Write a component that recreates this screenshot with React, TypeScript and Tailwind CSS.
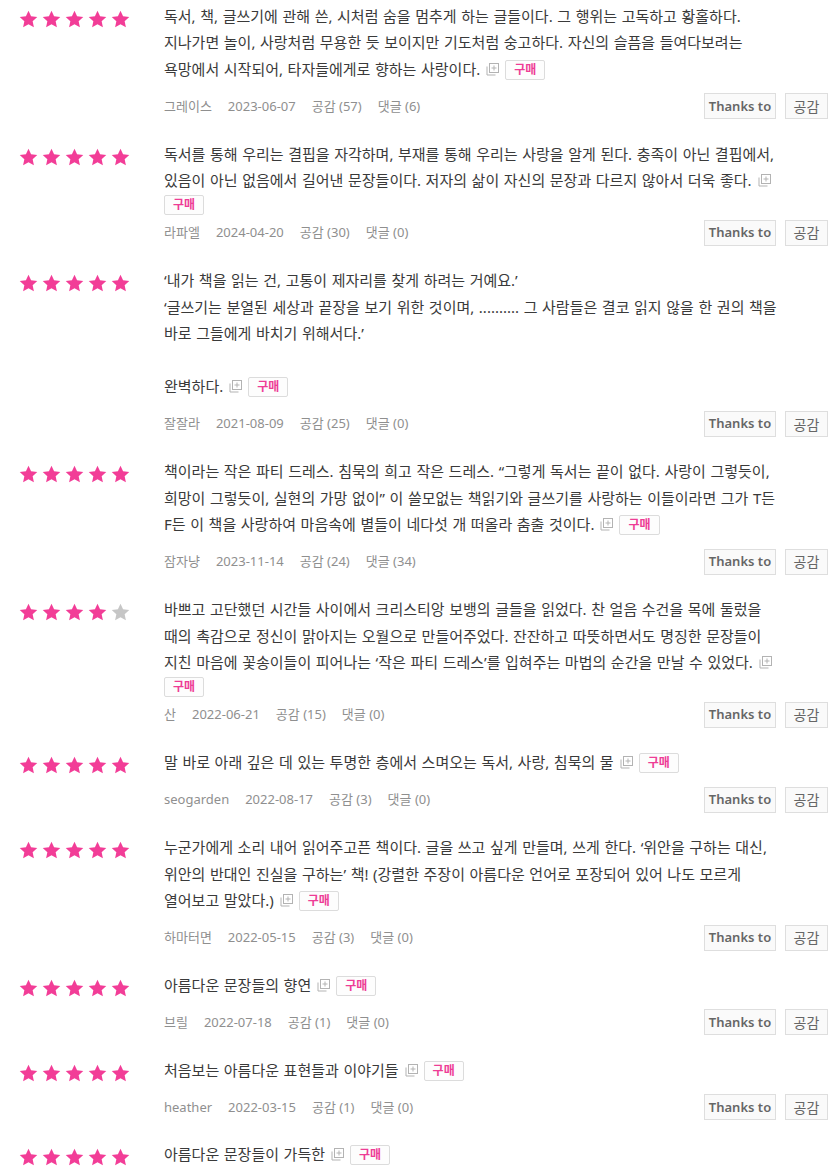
import React from "react";

type Review = {
  rating: number;
  lines: string[];
  badgeOwnLine?: boolean;
  user: string;
  date: string;
  likes: number;
  comments: number;
};

const reviews: Review[] = [
  {
    rating: 5,
    lines: [
      "독서, 책, 글쓰기에 관해 쓴, 시처럼 숨을 멈추게 하는 글들이다. 그 행위는 고독하고 황홀하다.",
      "지나가면 놀이, 사랑처럼 무용한 듯 보이지만 기도처럼 숭고하다. 자신의 슬픔을 들여다보려는",
      "욕망에서 시작되어, 타자들에게로 향하는 사랑이다.",
    ],
    user: "그레이스",
    date: "2023-06-07",
    likes: 57,
    comments: 6,
  },
  {
    rating: 5,
    lines: [
      "독서를 통해 우리는 결핍을 자각하며, 부재를 통해 우리는 사랑을 알게 된다. 충족이 아닌 결핍에서,",
      "있음이 아닌 없음에서 길어낸 문장들이다. 저자의 삶이 자신의 문장과 다르지 않아서 더욱 좋다.",
    ],
    badgeOwnLine: true,
    user: "라파엘",
    date: "2024-04-20",
    likes: 30,
    comments: 0,
  },
  {
    rating: 5,
    lines: [
      "‘내가 책을 읽는 건, 고통이 제자리를 찾게 하려는 거예요.’",
      "‘글쓰기는 분열된 세상과 끝장을 보기 위한 것이며, .......... 그 사람들은 결코 읽지 않을 한 권의 책을",
      "바로 그들에게 바치기 위해서다.’",
      "",
      "완벽하다.",
    ],
    user: "잘잘라",
    date: "2021-08-09",
    likes: 25,
    comments: 0,
  },
  {
    rating: 5,
    lines: [
      "책이라는 작은 파티 드레스. 침묵의 희고 작은 드레스. “그렇게 독서는 끝이 없다. 사랑이 그렇듯이,",
      "희망이 그렇듯이, 실현의 가망 없이” 이 쓸모없는 책읽기와 글쓰기를 사랑하는 이들이라면 그가 T든",
      "F든 이 책을 사랑하여 마음속에 별들이 네다섯 개 떠올라 춤출 것이다.",
    ],
    user: "잠자냥",
    date: "2023-11-14",
    likes: 24,
    comments: 34,
  },
  {
    rating: 4,
    lines: [
      "바쁘고 고단했던 시간들 사이에서 크리스티앙 보뱅의 글들을 읽었다. 찬 얼음 수건을 목에 둘렀을",
      "때의 촉감으로 정신이 맑아지는 오월으로 만들어주었다. 잔잔하고 따뜻하면서도 명징한 문장들이",
      "지친 마음에 꽃송이들이 피어나는 ‘작은 파티 드레스’를 입혀주는 마법의 순간을 만날 수 있었다.",
    ],
    badgeOwnLine: true,
    user: "산",
    date: "2022-06-21",
    likes: 15,
    comments: 0,
  },
  {
    rating: 5,
    lines: ["말 바로 아래 깊은 데 있는 투명한 층에서 스며오는 독서, 사랑, 침묵의 물"],
    user: "seogarden",
    date: "2022-08-17",
    likes: 3,
    comments: 0,
  },
  {
    rating: 5,
    lines: [
      "누군가에게 소리 내어 읽어주고픈 책이다. 글을 쓰고 싶게 만들며, 쓰게 한다. ‘위안을 구하는 대신,",
      "위안의 반대인 진실을 구하는’ 책! (강렬한 주장이 아름다운 언어로 포장되어 있어 나도 모르게",
      "열어보고 말았다.)",
    ],
    user: "하마터면",
    date: "2022-05-15",
    likes: 3,
    comments: 0,
  },
  {
    rating: 5,
    lines: ["아름다운 문장들의 향연"],
    user: "브릴",
    date: "2022-07-18",
    likes: 1,
    comments: 0,
  },
  {
    rating: 5,
    lines: ["처음보는 아름다운 표현들과 이야기들"],
    user: "heather",
    date: "2022-03-15",
    likes: 1,
    comments: 0,
  },
  {
    rating: 5,
    lines: ["아름다운 문장들이 가득한"],
    user: "",
    date: "",
    likes: 0,
    comments: 0,
  },
];

function Star({ on }: { on: boolean }) {
  return (
    <svg width="19" height="18" viewBox="0 0 24 23" className="shrink-0">
      <path
        d="M12 0.8l3.3 7.2 7.9 0.9-5.9 5.4 1.6 7.8L12 18.2l-6.9 3.9 1.6-7.8L0.8 8.9l7.9-0.9z"
        fill={on ? "#f23d97" : "#c6c6c6"}
      />
    </svg>
  );
}

function ExpandIcon() {
  return (
    <svg width="13" height="13" viewBox="0 0 13 13" className="inline-block align-[-1px] mx-[6px]">
      <path d="M1 3.5V12H9.5" fill="none" stroke="#b3b3b3" strokeWidth="1" />
      <rect x="3.5" y="0.5" width="9" height="9" fill="#fff" stroke="#b3b3b3" strokeWidth="1" />
      <path d="M8 2.5v5M5.5 5h5" stroke="#b3b3b3" strokeWidth="1" />
    </svg>
  );
}

function BuyBadge() {
  return (
    <span className="inline-flex items-center justify-center h-[20px] px-[8px] border border-[#dcdcdc] rounded-[2px] bg-[#fdfdfd] text-[12px] font-bold text-[#ee3d96] leading-none align-[1px] [word-spacing:0]">
      구매
    </span>
  );
}

function ReviewRow({ r, last }: { r: Review; last?: boolean }) {
  return (
    <div className="flex">
      <div className="w-[164px] shrink-0 pl-[19px] pt-[7px] flex gap-[4px]">
        {[0, 1, 2, 3, 4].map((i) => (
          <Star key={i} on={i < r.rating} />
        ))}
      </div>
      <div className="flex-1 pr-[12px]">
        <div className="text-[15px] leading-[26.6px] text-[#3a3a3a] whitespace-nowrap [word-spacing:0.7px]">
          {r.lines.map((line, i) => (
            <div key={i} className="h-[26.6px]">
              {line}
              {i === r.lines.length - 1 && (
                <>
                  <ExpandIcon />
                  {!r.badgeOwnLine && <BuyBadge />}
                </>
              )}
            </div>
          ))}
        </div>
        {r.badgeOwnLine && (
          <div className="mt-[1px] h-[20px] flex">
            <BuyBadge />
          </div>
        )}
        {!last && (
          <div className={`${r.badgeOwnLine ? "mt-[5px]" : "mt-[11px]"} flex items-center h-[26px]`}>
            <div className="flex-1 flex items-center gap-[16px] text-[13px] text-[#8f8f8f]">
              <span>{r.user}</span>
              <span>{r.date}</span>
              <span>공감 ({r.likes})</span>
              <span>댓글 ({r.comments})</span>
            </div>
            <div className="flex gap-[9px]">
              <button className="h-[26px] w-[72px] border border-[#dedede] bg-[#fafafa] text-[13px] font-semibold text-[#666]">
                Thanks to
              </button>
              <button className="h-[26px] w-[43px] border border-[#dedede] bg-[#fafafa] text-[14px] text-[#666]">
                공감
              </button>
            </div>
          </div>
        )}
      </div>
    </div>
  );
}

export default function App() {
  return (
    <div
      className="w-[840px] h-[1176px] overflow-hidden bg-white pt-[2.7px] flex flex-col gap-[21.2px]"
      style={{ fontFamily: '"Noto Sans", "Noto Sans CJK KR", sans-serif' }}
    >
      {reviews.map((r, i) => (
        <ReviewRow key={i} r={r} last={i === reviews.length - 1} />
      ))}
    </div>
  );
}
